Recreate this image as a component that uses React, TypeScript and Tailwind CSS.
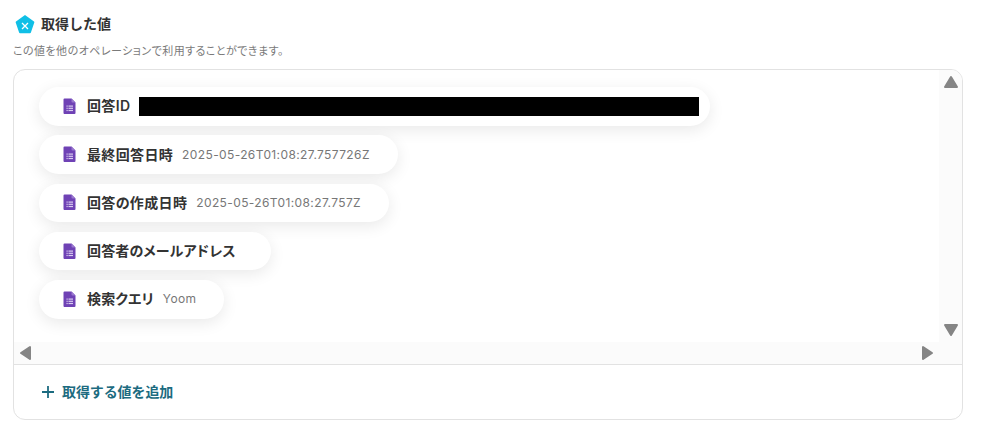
const FormIcon = () => (
  <svg width="13" height="17" viewBox="0 0 13 17" className="shrink-0">
    <path d="M1.5 0.5H8.5L12.5 4.5V15a1 1 0 0 1-1 1H1.5a1 1 0 0 1-1-1V1.500a1 1 0 0 1 1-1Z" fill="#6f42b5" />
    <path d="M8.500 0.500l4 4h-3a1 1 0 0 1-1-1Z" fill="#9a78d0" />
    <rect x="3.500" y="7.500" width="1.200" height="1.200" fill="#d9cdf0" />
    <rect x="3.500" y="9.700" width="1.200" height="1.200" fill="#d9cdf0" />
    <rect x="3.500" y="11.900" width="1.200" height="1.200" fill="#d9cdf0" />
    <rect x="5.500" y="7.500" width="4.500" height="1.200" fill="#d9cdf0" />
    <rect x="5.500" y="9.700" width="4.500" height="1.200" fill="#d9cdf0" />
    <rect x="5.500" y="11.900" width="4.500" height="1.200" fill="#d9cdf0" />
  </svg>
);

const Pill = ({ label, value, mask, labelTracking = "tracking-[0.35px]" }: { label: string; value?: string; mask?: boolean; labelTracking?: string }) => (
  <div className="flex h-[38.5px] w-fit items-center rounded-full bg-white pl-[24px] pr-[11px] shadow-[0_4px_16px_rgba(0,0,0,0.09)]">
    <FormIcon />
    <span className={`mb-[1px] ml-[11px] text-[14px] font-semibold text-[#333333] [font-feature-settings:'palt'] ${labelTracking}`}>{label}</span>
    {mask && <span className="ml-[9px] h-[19px] w-[560px] bg-black" />}
    {value && <span className="ml-[9px] mr-[17px] text-[12px] tracking-[0.38px] text-[#777777]">{value}</span>}
    {!mask && !value && <span className="mr-[24px]" />}
  </div>
);

const Tri = ({ points }: { points: string }) => (
  <svg width="16" height="16" viewBox="0 0 16 16" className="block">
    <polygon points={points} fill="#858585" stroke="#858585" strokeWidth="2" strokeLinejoin="round" />
  </svg>
);

export default function App() {
  return (
    <div
      className="h-[439px] w-[982px] overflow-hidden bg-white pl-[13px] pr-[19px] pt-[12px]"
      style={{ fontFamily: "Inter, 'Noto Sans CJK JP', sans-serif" }}
    >
      <div className="flex h-[24px] items-center gap-[6px] pl-[2px]">
        <svg width="20" height="20" viewBox="0 0 20 20" className="shrink-0">
          <path d="M10 1l9 6.500a1 1 0 0 1 .3 1.100l-3.400 10a1 1 0 0 1-.9.700H5a1 1 0 0 1-.9-.7L.7 8.600a1 1 0 0 1 .3-1.100Z" fill="#10bfe6" />
          <path d="M7 9l6 6M13 9l-6 6" stroke="#ffffff" strokeWidth="1.300" />
        </svg>
        <h2 className="mb-[2px] text-[14px] font-semibold text-[#333333]">取得した値</h2>
      </div>
      <p className="mt-[7px] text-[11px] leading-[16px] tracking-[0.46px] text-[#7a7a7a] [font-feature-settings:'palt']">この値を他のオペレーションで利用することができます。</p>
      <div className="mt-[10px] h-[351px] overflow-hidden rounded-[12px] border border-[#e2e2e2]">
        <div className="flex h-[295px] border-b border-[#e2e2e2]">
          <div className="flex min-w-0 flex-1 flex-col">
            <div className="flex flex-1 flex-col gap-[9.75px] pl-[25px] pt-[17px]">
              <Pill label="回答ID" mask />
              <Pill label="最終回答日時" value="2025-05-26T01:08:27.757726Z" />
              <Pill label="回答の作成日時" value="2025-05-26T01:08:27.757Z" />
              <Pill label="回答者のメールアドレス" labelTracking="tracking-[0.15px]" />
              <Pill label="検索クエリ" value="Yoom" labelTracking="tracking-[0.15px]" />
            </div>
            <div className="flex h-[22px] items-center justify-between bg-[#fbfbfb] pl-[4px] pr-[4px]">
              <Tri points="12,2 12,14 3,8" />
              <Tri points="4,2 4,14 13,8" />
            </div>
          </div>
          <div className="flex w-[23px] flex-col items-center justify-between bg-[#fbfbfb] pb-[26px] pt-[4px]">
            <Tri points="8,3 14,13 2,13" />
            <Tri points="2,3 14,3 8,13" />
          </div>
        </div>
        <div className="flex h-[54px] items-center gap-[7px] pl-[27px] text-[14px] font-semibold text-[#1c6b80]">
          <svg width="14" height="14" viewBox="0 0 14 14" className="shrink-0">
            <path d="M7 1v12M1 7h12" stroke="#1c6b80" strokeWidth="1.800" />
          </svg>
          <span className="mb-[2px] tracking-[-0.1px]">取得する値を追加</span>
        </div>
      </div>
    </div>
  );
}
